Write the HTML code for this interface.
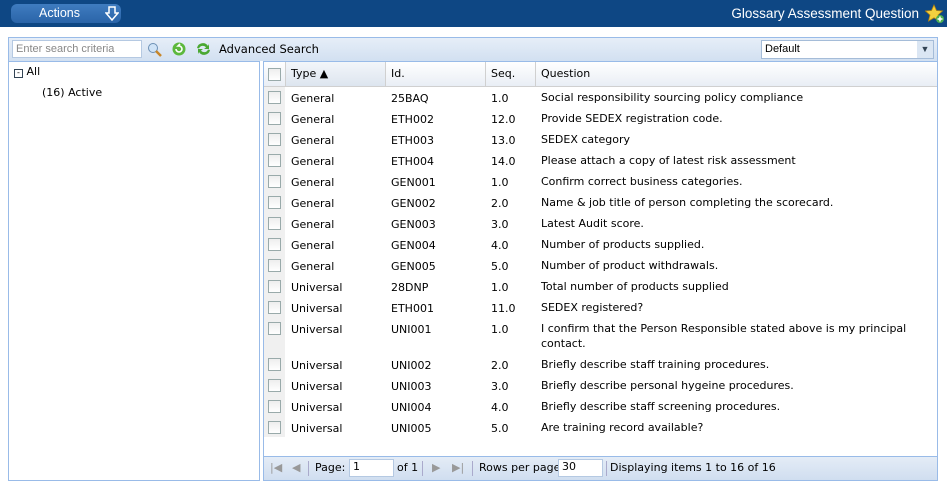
<!DOCTYPE html>
<html><head><meta charset="utf-8"><style>
*{box-sizing:border-box;margin:0;padding:0}
body{width:947px;height:483px;background:#fff;font-family:"DejaVu Sans",Verdana,sans-serif;font-size:11px;color:#000;position:relative;overflow:hidden}
.top{position:absolute;left:0;top:0;width:947px;height:27px;background:#0e4784}
.act{position:absolute;left:11px;top:4px;width:110px;height:19px;border-radius:6px;background:linear-gradient(#3f7cc0,#2a64a8);color:#fff;font-family:"Liberation Sans",sans-serif;font-size:12.5px;line-height:19px;padding-left:28px}
.title{position:absolute;right:28px;top:6px;color:#fff;font-family:"Liberation Sans",sans-serif;font-size:13.5px}
.tb{position:absolute;left:8px;top:37px;width:930px;height:24px;background:linear-gradient(#e6eef8,#d2e0f1);border:1px solid #99bbe8;border-bottom:none}
.search{position:absolute;left:3px;top:2px;width:130px;height:18px;background:#fff;border:1px solid #b5c9e2;color:#888;font-family:"Liberation Sans",sans-serif;font-size:11px;padding:2px 3px}
.sel{position:absolute;left:752px;top:2px;width:173px;height:19px;background:#fff;border:1px solid #a5bcd8;font-family:"Liberation Sans",sans-serif;font-size:11px;padding:2px 3px}
.sel span{position:absolute;right:0;top:0;width:16px;height:17px;background:#dbe6f3;text-align:center;font-size:9px;color:#345;line-height:17px}
.left{position:absolute;left:8px;top:61px;width:252px;height:420px;border:1px solid #99bbe8;background:#fff}
.grid{position:absolute;left:263px;top:61px;width:675px;height:420px;border:1px solid #99bbe8;background:#fff}
.hdr{position:absolute;left:0;top:0;width:673px;height:25px;background:linear-gradient(#fff,#e9eef5);border-bottom:1px solid #d0d0d0}
.hdr div{position:absolute;top:0;height:24px;line-height:24px;border-right:1px solid #d0d0d0;padding-left:5px}
.cb{position:absolute;width:13px;height:13px;border:1px solid #9aa;background:linear-gradient(#eee,#fff)}
.row{position:absolute;left:0;width:673px}
.row span{position:absolute;top:4px}
.gut{position:absolute;left:0;top:25px;width:21px;height:350px;background:#f0f0f0}
.pg{position:absolute;left:0;bottom:0;width:673px;height:24px;background:linear-gradient(#e4ecf6,#d0def0);border-top:1px solid #99bbe8;font-size:11px;line-height:22px}
.pg span{position:absolute;top:0}
.inp{position:absolute;top:2px;height:18px;background:#fff;border:1px solid #b5c9e2;line-height:14px;padding-left:3px}
.sep{position:absolute;top:4px;width:1px;height:15px;background:#aac}
</style></head><body>
<div class="top">
<div class="act">Actions<svg style="position:absolute;left:94px;top:2px" width="14" height="15" viewBox="0 0 14 15"><path d="M4 1h6v6h3l-6 7-6-7h3z" fill="none" stroke="#fff" stroke-width="1.5"/></svg></div>
<div class="title">Glossary Assessment Question</div>
<svg style="position:absolute;left:925px;top:4px" width="20" height="20" viewBox="0 0 20 20"><path d="M9 1l2.5 5.5 6 .5-4.5 4 1.5 6-5.5-3.2-5.5 3.2 1.5-6-4.5-4 6-.5z" fill="#f4d03f" stroke="#b8860b" stroke-width=".8"/><circle cx="15" cy="15" r="4" fill="#4caf50"/><path d="M15 12.5v5M12.5 15h5" stroke="#fff" stroke-width="1.5"/></svg>
</div>
<div class="tb">
<div class="search">Enter search criteria</div>
<svg style="position:absolute;left:138px;top:4px" width="16" height="16"><circle cx="6" cy="6" r="4.5" fill="#cfe3f7" stroke="#6b8fb5"/><path d="M9 9l5 5" stroke="#c8862a" stroke-width="2.5"/></svg>
<svg style="position:absolute;left:162px;top:3px" width="16" height="16"><circle cx="8" cy="8" r="6.5" fill="#5cb83c"/><path d="M5 8a3 3 0 1 0 3-3h-1l2-2" fill="none" stroke="#fff" stroke-width="1.6"/></svg>
<svg style="position:absolute;left:186px;top:3px" width="17" height="16"><path d="M2 7a6 6 0 0 1 11-2l1-2v5h-5l2-1.5a4 4 0 0 0-7 1z M15 9a6 6 0 0 1-11 2l-1 2v-5h5l-2 1.5a4 4 0 0 0 7-1z" fill="#4aa832"/></svg>
<span style="position:absolute;left:210px;top:4px;font-size:11.5px">Advanced Search</span>
<div class="sel">Default<span>&#9660;</span></div>
</div>
<div class="left">
<div style="position:absolute;left:5px;top:3px"><span style="display:inline-block;width:9px;height:9px;border:1px solid #345;font-size:8px;line-height:6px;text-align:center;vertical-align:0">-</span> All</div>
<div style="position:absolute;left:33px;top:24px">(16) Active</div>
</div>
<div class="grid">
<div class="gut"></div>
<div class="hdr">
<div style="left:0;width:22px;background:linear-gradient(#fff,#e9eef5)"><span class="cb" style="left:4px;top:6px"></span></div>
<div style="left:22px;width:100px;background:linear-gradient(#f3f6fa,#dde5ef)">Type &#9650;</div>
<div style="left:122px;width:100px">Id.</div>
<div style="left:222px;width:50px">Seq.</div>
<div style="left:272px;width:401px;border-right:none">Question</div>
</div>
<div id="rows"></div>
<div class="pg">
<span style="left:6px;color:#999">|&#9664;</span><span style="left:28px;color:#999">&#9664;</span>
<div class="sep" style="left:44px"></div>
<span style="left:51px">Page:</span><div class="inp" style="left:85px;width:45px">1</div>
<span style="left:133px">of 1</span><div class="sep" style="left:158px"></div>
<span style="left:168px;color:#999">&#9654;</span><span style="left:188px;color:#999">&#9654;|</span>
<div class="sep" style="left:208px"></div>
<span style="left:215px">Rows per page</span><div class="inp" style="left:294px;width:45px">30</div>
<div class="sep" style="left:342px"></div>
<span style="left:346px">Displaying items 1 to 16 of 16</span>
</div>
</div>
<script>
var d=[["General","25BAQ","1.0","Social responsibility sourcing policy compliance"],["General","ETH002","12.0","Provide SEDEX registration code."],["General","ETH003","13.0","SEDEX category"],["General","ETH004","14.0","Please attach a copy of latest risk assessment"],["General","GEN001","1.0","Confirm correct business categories."],["General","GEN002","2.0","Name &amp; job title of person completing the scorecard."],["General","GEN003","3.0","Latest Audit score."],["General","GEN004","4.0","Number of products supplied."],["General","GEN005","5.0","Number of product withdrawals."],["Universal","28DNP","1.0","Total number of products supplied"],["Universal","ETH001","11.0","SEDEX registered?"],["Universal","UNI001","1.0","I confirm that the Person Responsible stated above is my principal<br>contact."],["Universal","UNI002","2.0","Briefly describe staff training procedures."],["Universal","UNI003","3.0","Briefly describe personal hygeine procedures."],["Universal","UNI004","4.0","Briefly describe staff screening procedures."],["Universal","UNI005","5.0","Are training record available?"]];
var h="",y=26;
d.forEach(function(r,i){var ht=i==11?36:21;
h+='<div class="row" style="top:'+y+'px;height:'+ht+'px"><span class="cb" style="left:4px;top:3px"></span><span style="left:27px">'+r[0]+'</span><span style="left:127px">'+r[1]+'</span><span style="left:227px">'+r[2]+'</span><span style="left:277px;line-height:15px;top:2px">'+r[3]+'</span></div>';y+=ht;});
document.getElementById("rows").innerHTML=h;
</script>
</body></html>
